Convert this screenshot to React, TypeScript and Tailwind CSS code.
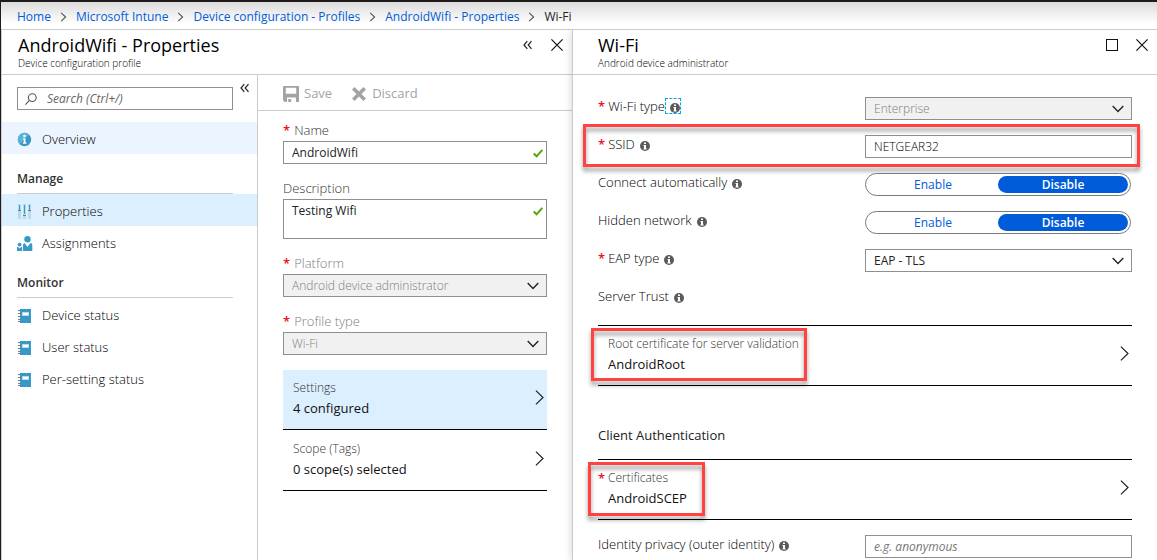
import React, { useState } from 'react';

/* ---------- Icons ---------- */

const CrumbArrow = () => (
    <svg className="w-[7px] h-3 shrink-0" viewBox="0 0 7 12" fill="none" stroke="#555" strokeWidth="1.1">
        <path d="M1.2 1.8 5.6 6 1.2 10.2" />
    </svg>
);

const DoubleLeft = () => (
    <svg className="w-[10px] h-[10px]" viewBox="0 0 10 10" fill="none" stroke="#222" strokeWidth="1.2">
        <path d="M4.3 1.2 1 5l3.300 3.800M8.500 1.200 5.200 5l3.300 3.800" />
    </svg>
);

const CloseIcon = () => (
    <svg className="w-3 h-3" viewBox="0 0 12 12" fill="none" stroke="#111" strokeWidth="1.2">
        <path d="M.4.4l11.2 11.2M11.6.4.4 11.6" />
    </svg>
);

const ChevronRight = () => (
    <svg className="w-[9px] h-[15px] shrink-0" viewBox="0 0 9 15" fill="none" stroke="#222" strokeWidth="1.2">
        <path d="M.9.6 8 7.5.9 14.4" />
    </svg>
);

const ChevronDown = () => (
    <svg className="absolute right-2 top-2 w-[12px] h-[8px] pointer-events-none" viewBox="0 0 12 8" fill="none" stroke="#222" strokeWidth="1.4">
        <path d="M.7 1.1 6 6.4l5.3-5.3" />
    </svg>
);

const CheckIcon = () => (
    <svg className="absolute right-1 top-2 w-[10px] h-[9px] pointer-events-none" viewBox="0 0 10 9" fill="none" stroke="#57a300" strokeWidth="2">
        <path d="M.7 4.6 3.6 7.3 9.3.9" />
    </svg>
);

const SearchIcon = () => (
    <svg className="w-3 h-3 shrink-0" viewBox="0 0 12 12" fill="none" stroke="#555" strokeWidth="1.1">
        <circle cx="7.3" cy="4.6" r="3.9" />
        <path d="M4.4 7.4.4 11.6" />
    </svg>
);

const InfoIcon = () => (
    <svg className="w-[10px] h-[10px] shrink-0" viewBox="0 0 10 10">
        <circle cx="5" cy="5" r="5" fill="#5b5b5b" />
        <path d="M4 1.500h2v1.500H4zM3.500 4H6v3.500h.7v1H3.400v-1H4V5h-.5z" fill="#fff" />
    </svg>
);

const SaveIcon = () => (
    <svg className="w-4 h-4" viewBox="0 0 16 16">
        <path fillRule="evenodd" fill="#a3a3a3" d="M1 0h14a1 1 0 0 1 1 1v15h-3v-4.500H4V16H1.800L0 14.200V1a1 1 0 0 1 1-1zm1.800 1.800v6h10.400v-6zM5.200 13h3v3h-3z" />
    </svg>
);

const DiscardIcon = () => (
    <svg className="w-[14px] h-[14px]" viewBox="0 0 14 14" fill="none" stroke="#a3a3a3" strokeWidth="3.6">
        <path d="M1.300 1.300l11.400 11.400M12.700 1.300 1.300 12.700" />
    </svg>
);

const OverviewIcon = () => (
    <svg className="w-4 h-4" viewBox="0 0 16 16">
        <circle cx="7.500" cy="7.500" r="6.700" fill="#3999c6" />
        <path d="M12.200 2.700A6.700 6.700 0 0 0 2.700 12.200z" fill="#59b4d9" />
        <circle cx="7.500" cy="4" r="1.300" fill="#fff" />
        <path d="M6 6.200h2.500v4.400h.9v1.100H5.900v-1.100h.8V7.300H6z" fill="#fff" />
    </svg>
);

const PropertiesIcon = () => (
    <svg className="w-4 h-4" viewBox="0 0 16 16">
        <path d="M1 0h3v15H1zM6 0h3v15H6zM11 0h3v15h-3z" fill="#b4dcea" />
        <path d="M2 1h1v5H2zM7 1h1v9H7zM12 1h1v5h-1z" fill="#3999c6" />
        <path d="M1 6h3v1H1zM6 11h3v1H6zM11 6h3v1h-3z" fill="#7a7a7a" />
    </svg>
);

const AssignmentsIcon = () => (
    <svg className="w-4 h-4" viewBox="0 0 16 16" fill="#3999c6">
        <circle cx="10.500" cy="3.200" r="3.200" />
        <path d="M6 15V9a2 2 0 0 1 1.500-1.900L10.500 11l3-3.900A2 2 0 0 1 15.300 9v6z" />
        <circle cx="2.600" cy="8.600" r="1.900" />
        <path d="M0 15v-3.200c0-.6.400-1 1-1l1.600 1.700 1.600-1.700c.6 0 .9.400.9 1V15z" />
    </svg>
);

const StatusIcon = () => (
    <svg className="w-4 h-4" viewBox="0 0 16 16">
        <path d="M1 2h2v1H1zM1 5h2v1H1zM1 8h2v1H1zM1 11h2v1H1zM1 13h2v1H1z" fill="#7a7a7a" />
        <path d="M3 1h11v14H3z" fill="#3999c6" />
        <path d="M5 4h7v4H5z" fill="#b4dcea" />
        <path d="M6 5h5v2H6z" fill="#fff" />
    </svg>
);

/* ---------- Shared pieces ---------- */

const Star = ({ className = 'mr-1' }: { className?: string }) => (
    <span className={`text-[#e81123] font-semibold ${className}`}>*</span>
);

const Callout = ({ className }: { className: string }) => (
    <div className={`absolute border-3 border-[#ff4343] pointer-events-none drop-shadow-[0_4px_2px_rgba(0,0,0,0.4)] ${className}`} />
);

interface SelectProps {
    id: string;
    value: string;
    disabled?: boolean;
}

const Select = ({ id, value, disabled }: SelectProps) => (
    <div className="relative">
        <select
            id={id}
            disabled={disabled}
            className="block w-full h-[23px] appearance-none border border-[#8f8f8f] bg-white pl-2 pr-6 text-xs leading-5 text-[#222] disabled:bg-[#f1f1f1] disabled:font-light disabled:text-[#808080] disabled:opacity-100"
        >
            <option>{value}</option>
        </select>
        <ChevronDown />
    </div>
);

const Toggle = ({ name }: { name: string }) => {
    const [selected, setSelected] = useState('Disable');
    return (
        <div role="radiogroup" aria-label={name} className="flex h-[23px] mr-px rounded-full border border-[#7a7a7a] bg-white p-[2px]">
            {['Enable', 'Disable'].map(option => (
                <label
                    key={option}
                    className={`relative flex-1 rounded-full text-center text-xs leading-[17px] ${selected === option ? 'bg-[#015cda] text-white font-semibold' : 'text-[#015cda]'}`}
                >
                    <input
                        type="radio"
                        name={name}
                        className="sr-only"
                        checked={selected === option}
                        onChange={() => setSelected(option)}
                    />
                    {option}
                </label>
            ))}
        </div>
    );
};

interface FieldRowProps {
    label: string;
    htmlFor?: string;
    required?: boolean;
    focused?: boolean;
    children?: React.ReactNode;
}

const FieldRow = ({ label, htmlFor, required, focused, children }: FieldRowProps) => {
    const text = (
        <>
            {required && <Star className="mr-[3px]" />}
            {label}
        </>
    );
    return (
        <div className="relative grid grid-cols-2 items-start min-h-5">
            <div className="flex h-[18px] items-center text-[13px] leading-[18px] font-light text-black">
                {htmlFor ? <label htmlFor={htmlFor}>{text}</label> : <span>{text}</span>}
                <button
                    type="button"
                    aria-label={`About ${label}`}
                    className={focused ? 'border border-dashed border-[#00abec] pl-1 pt-1' : 'pl-[5px] pt-[3px]'}
                >
                    <InfoIcon />
                </button>
            </div>
            {children}
        </div>
    );
};

interface PickerProps {
    label: string;
    value: string;
    className: string;
    required?: boolean;
    callout?: string;
}

const Picker = ({ label, value, className, required, callout }: PickerProps) => (
    <button type="button" className={`relative flex w-full items-center justify-between border-black pl-[10px] pr-[3px] text-left ${className}`}>
        <span>
            <span className="relative block text-xs leading-5 font-light text-[#333]">
                {required && <span className="absolute -left-[10px] text-[13px] font-semibold text-[#e81123]">*</span>}
                {label}
            </span>
            <span className="block text-[13px] leading-5 text-[#111]">{value}</span>
        </span>
        <ChevronRight />
        {callout && <Callout className={callout} />}
    </button>
);

/* ---------- Menu ---------- */

interface MenuItemProps {
    icon: React.ReactNode;
    label: string;
    className?: string;
}

const MenuItem = ({ icon, label, className = '' }: MenuItemProps) => (
    <a href="#" className={`flex h-8 items-center gap-[9px] pt-[3px] pl-[15px] text-[13px] font-light text-black ${className}`}>
        {icon}
        {label}
    </a>
);

const MenuHeading = ({ children }: { children: React.ReactNode }) => (
    <h2 className="ml-[15px] mr-6 mt-[15px] h-[25px] border-b border-[#ccc] text-xs leading-5 font-semibold text-[#333]">
        {children}
    </h2>
);

const Menu = () => (
    <nav className="w-64 shrink-0 border-r border-[#ccc]">
        <div className="flex items-start gap-[7px] pl-[15px] pr-[7px] pt-3">
            <label className="flex h-[23px] flex-1 items-center gap-[10px] border border-[#8f8f8f] px-[7px]">
                <SearchIcon />
                <input
                    type="text"
                    aria-label="Search"
                    placeholder="Search (Ctrl+/)"
                    className="w-full text-xs italic outline-none placeholder:text-[#646464]"
                />
            </label>
            <button type="button" aria-label="Collapse menu" className="-mt-1">
                <DoubleLeft />
            </button>
        </div>
        <MenuItem icon={<OverviewIcon />} label="Overview" className="mt-3 bg-[#ecf5ff]" />
        <MenuHeading>Manage</MenuHeading>
        <MenuItem icon={<PropertiesIcon />} label="Properties" className="bg-[#dcefff]" />
        <MenuItem icon={<AssignmentsIcon />} label="Assignments" />
        <MenuHeading>Monitor</MenuHeading>
        <MenuItem icon={<StatusIcon />} label="Device status" />
        <MenuItem icon={<StatusIcon />} label="User status" />
        <MenuItem icon={<StatusIcon />} label="Per-setting status" />
    </nav>
);

/* ---------- Blades ---------- */

const PropertiesForm = () => (
    <div className="min-w-0 flex-1">
        <div className="flex h-9 items-center gap-5 border-b border-[#ccc] pl-[25px] pt-[2px] text-[13px] text-[#a3a3a3]">
            <button type="button" disabled className="flex items-center gap-[5px]">
                <SaveIcon />
                Save
            </button>
            <button type="button" disabled className="flex items-center gap-[6px]">
                <DiscardIcon />
                Discard
            </button>
        </div>
        <form className="flex flex-col gap-[15px] px-[25px] pt-[10px] text-[13px] text-[#333]">
            <div>
                <label htmlFor="name" className="block pb-[2px] leading-[18px] font-light"><Star />Name</label>
                <div className="relative">
                    <input
                        id="name"
                        type="text"
                        defaultValue="AndroidWifi"
                        className="block w-full h-[23px] border border-[#8f8f8f] pl-2 pr-6 text-xs text-[#222]"
                    />
                    <CheckIcon />
                </div>
            </div>
            <div>
                <label htmlFor="description" className="block pb-[2px] leading-[18px] font-light">Description</label>
                <div className="relative">
                    <textarea
                        id="description"
                        defaultValue="Testing Wifi"
                        className="block w-full h-10 resize-none overflow-hidden border border-[#8f8f8f] py-[2px] pl-2 pr-6 text-xs leading-[18px] text-[#222]"
                    />
                    <CheckIcon />
                </div>
            </div>
            <div>
                <label htmlFor="platform" className="block pb-[2px] leading-[18px] font-light text-[#808080]"><Star />Platform</label>
                <Select id="platform" value="Android device administrator" disabled />
            </div>
            <div>
                <label htmlFor="profile-type" className="block pb-[2px] leading-[18px] font-light text-[#808080]"><Star />Profile type</label>
                <Select id="profile-type" value="Wi-Fi" disabled />
            </div>
            <div className="flex flex-col gap-px">
                <Picker label="Settings" value="4 configured" className="h-[60px] border-b bg-[#dcefff] pb-1" />
                <Picker label="Scope (Tags)" value="0 scope(s) selected" className="h-[60px] border-b pb-1" />
            </div>
        </form>
    </div>
);

const WifiForm = () => (
    <form className="px-[25px] pt-[22px]">
        <div className="flex flex-col gap-[15px]">
            <FieldRow label="Wi-Fi type" htmlFor="wifi-type" required focused>
                <Select id="wifi-type" value="Enterprise" disabled />
            </FieldRow>
            <FieldRow label="SSID" htmlFor="ssid" required>
                <input
                    id="ssid"
                    type="text"
                    defaultValue="NETGEAR32"
                    className="block w-full h-[23px] border border-[#8f8f8f] px-2 text-xs font-light text-black"
                />
                <Callout className="-left-[15px] -right-2 -top-[11px] -bottom-[9px]" />
            </FieldRow>
            <FieldRow label="Connect automatically">
                <Toggle name="Connect automatically" />
            </FieldRow>
            <FieldRow label="Hidden network">
                <Toggle name="Hidden network" />
            </FieldRow>
            <FieldRow label="EAP type" htmlFor="eap-type" required>
                <Select id="eap-type" value="EAP - TLS" />
            </FieldRow>
            <FieldRow label="Server Trust" />
        </div>
        <div className="mt-[18px]">
            <Picker
                label="Root certificate for server validation"
                value="AndroidRoot"
                className="h-[61px] border-y pb-1"
                callout="-left-[7px] top-[2px] h-[53px] w-[216px]"
            />
        </div>
        <h2 className="mt-[39px] text-[13px] leading-5 text-[#222]">Client Authentication</h2>
        <div className="mt-[14px] mb-[15px]">
            <Picker
                label="Certificates"
                value="AndroidSCEP"
                required
                className="h-[61px] border-y pb-1"
                callout="-left-[10px] top-[2px] h-[54px] w-[117px]"
            />
        </div>
        <FieldRow label="Identity privacy (outer identity)" htmlFor="identity">
            <input
                id="identity"
                type="text"
                placeholder="e.g. anonymous"
                className="block w-full h-[23px] border border-[#8f8f8f] px-2 text-xs placeholder:italic placeholder:text-[#767676]"
            />
        </FieldRow>
    </form>
);

interface BladeHeaderProps {
    title: string;
    subtitle: string;
    className: string;
    children: React.ReactNode;
}

const BladeHeader = ({ title, subtitle, className, children }: BladeHeaderProps) => (
    <header className={`flex h-[45px] items-start justify-between border-b border-[#ccc] ${className}`}>
        <div className="pt-[3px]">
            <h1 className="text-[18px] leading-6 font-medium text-black">{title}</h1>
            <p className="text-[10px] leading-3 font-light text-black">{subtitle}</p>
        </div>
        <div className="flex items-center pt-[9px]">{children}</div>
    </header>
);

const CRUMBS = ['Home', 'Microsoft Intune', 'Device configuration - Profiles', 'AndroidWifi - Properties'];

const App: React.FC = () => {
    return (
        <div className="flex min-h-screen flex-col border-l border-t-2 border-[#1f1b1c] bg-white font-['Open_Sans','Noto_Sans',sans-serif]">
            <nav className="flex h-7 items-center gap-[9px] border-b border-[#ccc] bg-linear-to-b from-[#dcdcdc] to-white to-80% pl-4 pt-[2px] text-xs text-[#222]">
                {CRUMBS.map(crumb => (
                    <React.Fragment key={crumb}>
                        <a href="#" className="text-[#015cda]">{crumb}</a>
                        <CrumbArrow />
                    </React.Fragment>
                ))}
                <span>Wi-Fi</span>
            </nav>

            <main className="flex flex-1 border-l border-[#ccc]">
                <section className="flex w-[570px] shrink-0 flex-col">
                    <BladeHeader title="AndroidWifi - Properties" subtitle="Device configuration profile" className="pl-4 pr-[9px]">
                        <button type="button" aria-label="Collapse" className="mr-[18px]"><DoubleLeft /></button>
                        <button type="button" aria-label="Close"><CloseIcon /></button>
                    </BladeHeader>
                    <div className="flex flex-1">
                        <Menu />
                        <PropertiesForm />
                    </div>
                </section>

                <section className="relative min-w-0 flex-1 border-l border-[#ccc] bg-white shadow-[-2px_0_6px_rgba(0,0,0,0.12)] [clip-path:inset(0_0_0_-10px)]">
                    <BladeHeader title="Wi-Fi" subtitle="Android device administrator" className="pl-[25px] pr-[9px]">
                        <button type="button" aria-label="Maximize" className="mr-[18px] h-3 w-3 border border-[#111]" />
                        <button type="button" aria-label="Close"><CloseIcon /></button>
                    </BladeHeader>
                    <WifiForm />
                </section>
            </main>
        </div>
    );
};

export default App;
